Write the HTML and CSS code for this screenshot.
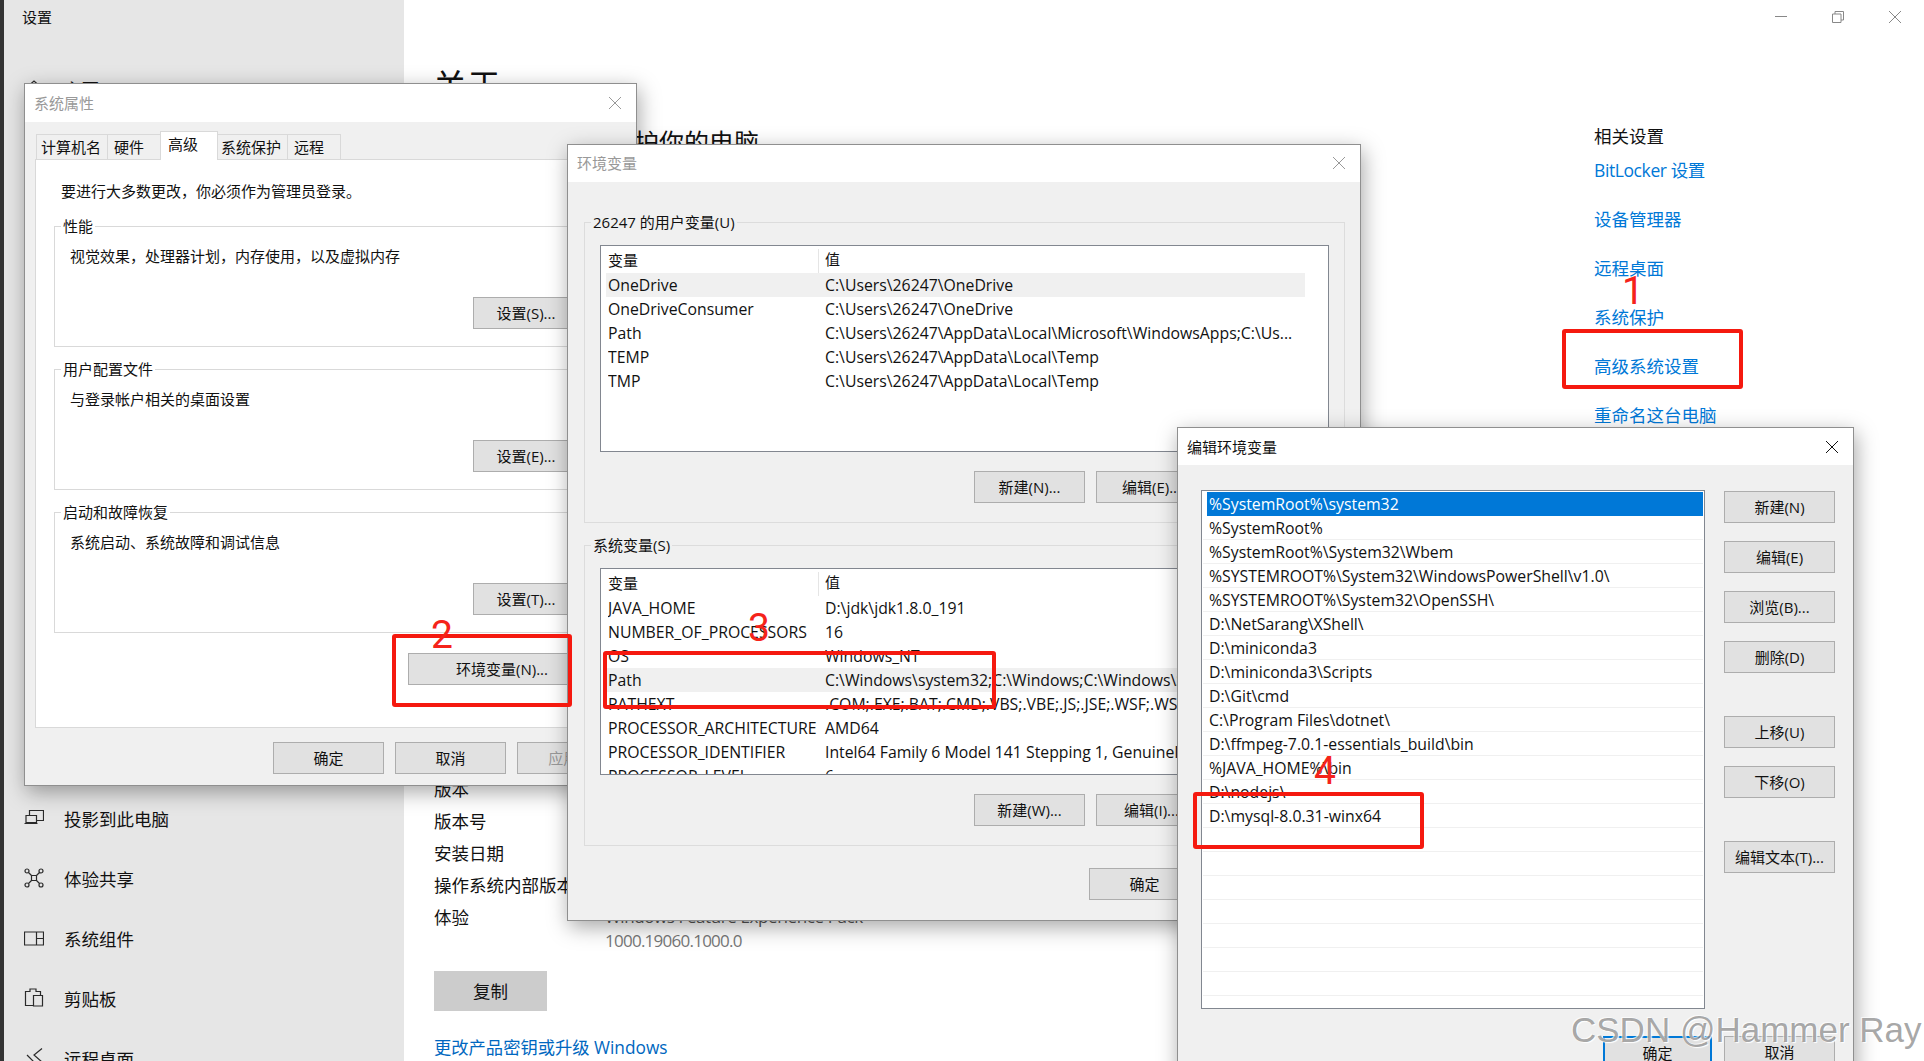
FILE: index.html
```html
<!DOCTYPE html>
<html lang="zh-CN">
<head>
<meta charset="utf-8">
<title>设置</title>
<link rel="stylesheet" href="styles.css">
</head>
<body>
<div class="desktop">
  <aside class="sidebar">
    <div class="app-title">设置</div>
    <div class="nav-home">
      <svg class="nav-icon" viewBox="0 0 20 20"><path d="M2 10 10 3l8 7M5 8v9h10V8"/></svg>
      <span>主页</span>
    </div>
    <nav class="nav-list">
      <div class="nav-item">
        <svg class="nav-icon" viewBox="0 0 20 20"><path d="M5.500 7V2.500H19.500V12.500H13M2 7.500H12.500V14.500H2ZM.5 15.500H13.500"/></svg>
        <span>投影到此电脑</span>
      </div>
      <div class="nav-item">
        <svg class="nav-icon" viewBox="0 0 20 20"><circle cx="3" cy="3" r="2"/><circle cx="17" cy="3" r="2"/><circle cx="3" cy="17" r="2"/><circle cx="17" cy="17" r="2"/><path d="M7.500 7.500H12.500V12.500H7.500ZM4.500 4.500 7.500 7.500M15.500 4.500 12.500 7.500M4.500 15.500 7.500 12.500M15.500 15.500 12.500 12.500"/></svg>
        <span>体验共享</span>
      </div>
      <div class="nav-item">
        <svg class="nav-icon" viewBox="0 0 20 20"><path d="M.5 4H19.500V17H.5ZM12.500 4V17M12.500 10.500H19.500"/></svg>
        <span>系统组件</span>
      </div>
      <div class="nav-item">
        <svg class="nav-icon" viewBox="0 0 20 20"><path d="M9 17.500H1.500V3.500H6V1H12V3.500H16.500V7M9.500 7.500H18.500V18H9.500Z"/></svg>
        <span>剪贴板</span>
      </div>
      <div class="nav-item">
        <svg class="nav-icon" viewBox="0 0 20 20"><path d="M18 .5 10 7 18 14M3 7 10 14"/></svg>
        <span>远程桌面</span>
      </div>
    </nav>
  </aside>

  <main class="content">
    <div class="about">
      <h1 class="about-title">关于</h1>
      <h2 class="about-sub">系统正在监控并保护你的电脑</h2>
      <dl class="spec">
        <dt>版本</dt><dd>Windows 10 专业版</dd>
        <dt>版本号</dt><dd>22H2</dd>
        <dt>安装日期</dt><dd>2023/3/1</dd>
        <dt>操作系统内部版本</dt><dd>19045.4894</dd>
        <dt>体验</dt><dd>Windows Feature Experience Pack<br><span class="muted">1000.19060.1000.0</span></dd>
      </dl>
      <div class="copy-btn">复制</div>
      <div class="product-link">更改产品密钥或升级 Windows</div>
    </div>
    <div class="related">
      <div class="related-title">相关设置</div>
      <div class="related-link is-tight">BitLocker 设置</div>
      <div class="related-link">设备管理器</div>
      <div class="related-link">远程桌面</div>
      <div class="related-link">系统保护</div>
      <div class="related-link">高级系统设置</div>
      <div class="related-link">重命名这台电脑</div>
    </div>
  </main>

  <div class="winctl">
    <svg class="ctl-min" viewBox="0 0 12 12"><path d="M0 5.500H12"/></svg>
    <svg class="ctl-max" viewBox="0 0 12 12"><path d="M.5 3V11.500H9V3ZM3 3V.5H11.500V9H9"/></svg>
    <svg class="ctl-close" viewBox="0 0 12 12"><path d="M0 0 12 12M12 0 0 12"/></svg>
  </div>

  <!-- 系统属性 -->
  <section class="win win-sys">
    <header class="titlebar is-dim"><span>系统属性</span>
      <svg class="x" viewBox="0 0 12 12"><path d="M0 0 12 12M12 0 0 12"/></svg></header>
    <div class="tabs">
      <div class="tab tab-a">计算机名</div>
      <div class="tab tab-b">硬件</div>
      <div class="tab tab-on">高级</div>
      <div class="tab tab-d">系统保护</div>
      <div class="tab tab-e">远程</div>
    </div>
    <div class="panel">
      <p class="intro">要进行大多数更改，你必须作为管理员登录。</p>
      <div class="group">
        <span class="legend">性能</span>
        <p class="group-text">视觉效果，处理器计划，内存使用，以及虚拟内存</p>
        <div class="btn btn-set">设置(S)...</div>
      </div>
      <div class="group">
        <span class="legend">用户配置文件</span>
        <p class="group-text">与登录帐户相关的桌面设置</p>
        <div class="btn btn-set">设置(E)...</div>
      </div>
      <div class="group">
        <span class="legend">启动和故障恢复</span>
        <p class="group-text">系统启动、系统故障和调试信息</p>
        <div class="btn btn-set">设置(T)...</div>
      </div>
      <div class="btn btn-env">环境变量(N)...</div>
    </div>
    <div class="footer">
      <div class="btn">确定</div>
      <div class="btn">取消</div>
      <div class="btn is-disabled">应用(A)</div>
    </div>
  </section>

  <!-- 环境变量 -->
  <section class="win win-env">
    <header class="titlebar is-dim"><span>环境变量</span>
      <svg class="x" viewBox="0 0 12 12"><path d="M0 0 12 12M12 0 0 12"/></svg></header>
    <div class="env-body">
      <div class="env-group">
        <span class="legend">26247 的用户变量(U)</span>
        <div class="list">
          <div class="list-head"><span class="head-name">变量</span><span>值</span></div>
          <div class="list-row is-hot"><span class="cell-name">OneDrive</span><span class="cell-val">C:\Users\26247\OneDrive</span></div>
          <div class="list-row"><span class="cell-name">OneDriveConsumer</span><span class="cell-val">C:\Users\26247\OneDrive</span></div>
          <div class="list-row"><span class="cell-name">Path</span><span class="cell-val">C:\Users\26247\AppData\Local\Microsoft\WindowsApps;C:\Us...</span></div>
          <div class="list-row"><span class="cell-name">TEMP</span><span class="cell-val">C:\Users\26247\AppData\Local\Temp</span></div>
          <div class="list-row"><span class="cell-name">TMP</span><span class="cell-val">C:\Users\26247\AppData\Local\Temp</span></div>
        </div>
        <div class="env-actions">
          <div class="btn">新建(N)...</div>
          <div class="btn">编辑(E)...</div>
          <div class="btn">删除(D)</div>
        </div>
      </div>
      <div class="env-group">
        <span class="legend">系统变量(S)</span>
        <div class="list">
          <div class="list-head"><span class="head-name">变量</span><span>值</span></div>
          <div class="list-row"><span class="cell-name">JAVA_HOME</span><span class="cell-val">D:\jdk\jdk1.8.0_191</span></div>
          <div class="list-row"><span class="cell-name">NUMBER_OF_PROCESSORS</span><span class="cell-val">16</span></div>
          <div class="list-row"><span class="cell-name">OS</span><span class="cell-val">Windows_NT</span></div>
          <div class="list-row is-hot"><span class="cell-name">Path</span><span class="cell-val">C:\Windows\system32;C:\Windows;C:\Windows\System32\Wbem</span></div>
          <div class="list-row"><span class="cell-name">PATHEXT</span><span class="cell-val">.COM;.EXE;.BAT;.CMD;.VBS;.VBE;.JS;.JSE;.WSF;.WSH;.MSC</span></div>
          <div class="list-row"><span class="cell-name">PROCESSOR_ARCHITECTURE</span><span class="cell-val">AMD64</span></div>
          <div class="list-row"><span class="cell-name">PROCESSOR_IDENTIFIER</span><span class="cell-val">Intel64 Family 6 Model 141 Stepping 1, GenuineIntel</span></div>
          <div class="list-row"><span class="cell-name">PROCESSOR_LEVEL</span><span class="cell-val">6</span></div>
        </div>
        <div class="env-actions">
          <div class="btn">新建(W)...</div>
          <div class="btn">编辑(I)...</div>
          <div class="btn">删除(L)</div>
        </div>
      </div>
      <div class="env-footer">
        <div class="btn">确定</div>
        <div class="btn">取消</div>
      </div>
    </div>
  </section>

  <!-- 编辑环境变量 -->
  <section class="win win-edit">
    <header class="titlebar"><span>编辑环境变量</span>
      <svg class="x" viewBox="0 0 12 12"><path d="M0 0 12 12M12 0 0 12"/></svg></header>
    <div class="edit-body">
      <div class="path-list">
        <div class="path-row is-sel">%SystemRoot%\system32</div>
        <div class="path-row">%SystemRoot%</div>
        <div class="path-row">%SystemRoot%\System32\Wbem</div>
        <div class="path-row">%SYSTEMROOT%\System32\WindowsPowerShell\v1.0\</div>
        <div class="path-row">%SYSTEMROOT%\System32\OpenSSH\</div>
        <div class="path-row">D:\NetSarang\XShell\</div>
        <div class="path-row">D:\miniconda3</div>
        <div class="path-row">D:\miniconda3\Scripts</div>
        <div class="path-row">D:\Git\cmd</div>
        <div class="path-row">C:\Program Files\dotnet\</div>
        <div class="path-row">D:\ffmpeg-7.0.1-essentials_build\bin</div>
        <div class="path-row">%JAVA_HOME%\bin</div>
        <div class="path-row">D:\nodejs\</div>
        <div class="path-row">D:\mysql-8.0.31-winx64</div>
        <div class="path-row"></div><div class="path-row"></div><div class="path-row"></div>
        <div class="path-row"></div><div class="path-row"></div><div class="path-row"></div>
        <div class="path-row"></div><div class="path-row"></div>
      </div>
      <div class="edit-side">
        <div class="btn">新建(N)</div>
        <div class="btn">编辑(E)</div>
        <div class="btn">浏览(B)...</div>
        <div class="btn">删除(D)</div>
        <div class="btn side-gap">上移(U)</div>
        <div class="btn">下移(O)</div>
        <div class="btn side-gap">编辑文本(T)...</div>
      </div>
      <div class="edit-footer">
        <div class="btn btn-primary">确定</div>
        <div class="btn">取消</div>
      </div>
    </div>
  </section>

  <!-- 标注 -->
  <div class="mark mark-1"></div>
  <div class="mark mark-2"></div>
  <div class="mark mark-3"></div>
  <div class="mark mark-4"></div>
  <span class="num num-1">1</span>
  <span class="num num-2">2</span>
  <span class="num num-3">3</span>
  <span class="num num-4">4</span>
  <div class="watermark">CSDN @Hammer Ray</div>
</div>
</body>
</html>
```
FILE: styles.css
```css
* { box-sizing: border-box; }
html, body { margin: 0; padding: 0; }
body { font-family: "Open Sans", "Noto Sans CJK SC", sans-serif; color: #111; background: #fff; }
p, h1, h2, dl, dd { margin: 0; font-weight: 400; }

.desktop { position: relative; width: 1924px; height: 1061px; overflow: hidden; display: flex; background: #fff; border-left: 4px solid #333; }

/* settings sidebar */
.sidebar { width: 400px; height: 1061px; background: #e6e6e6; flex: none; font-size: 17.5px; overflow: hidden; }
.app-title { font-size: 15px; line-height: 20px; padding: 7px 0 0 18px; }
.nav-home { display: flex; align-items: center; gap: 20px; padding-left: 20px; height: 60px; margin-top: 31px; }
.nav-list { margin-top: 670px; }
.nav-item { display: flex; align-items: center; gap: 20px; padding-left: 20px; height: 60px; }
.nav-icon { width: 20px; height: 20px; fill: none; stroke: #2a2a2a; stroke-width: 1.2; flex: none; }

/* settings main */
.content { flex: 1; display: flex; justify-content: space-between; min-width: 0; }
.about { padding-left: 30px; width: 1100px; font-size: 17.5px; }
.about-title { font-size: 34px; line-height: 44px; margin-top: 64px; margin-left: -1px; }
.about-sub { font-size: 25px; line-height: 34px; margin-top: 17px; white-space: nowrap; }
.spec { display: grid; grid-template-columns: 171px 1fr; grid-auto-rows: 32px; line-height: 32px; margin-top: 614px; }
.spec dd { line-height: 24px; padding-top: 4px; color: #555; font-size: 17px; letter-spacing: -.4px; white-space: nowrap; }
.muted { color: #777; letter-spacing: -.75px; }
.copy-btn { width: 113px; height: 40px; line-height: 40px; text-align: center; background: #ccc; margin-top: 38px; }
.product-link { color: #0067c0; font-size: 17.3px; line-height: 24px; margin-top: 25px; white-space: nowrap; }
.related { width: 330px; flex: none; font-size: 17.5px; color: #0078d7; padding-top: 121.4px; }
.related-title { color: #111; line-height: 30px; }
.related-link { line-height: 30px; margin-top: 19px; white-space: nowrap; }
.related-title + .related-link { margin-top: 4px; }
.is-tight { letter-spacing: -.4px; }

.winctl { position: absolute; top: 11px; left: 1771px; display: flex; gap: 45px; }
.winctl svg { width: 12px; height: 12px; fill: none; stroke: #888; stroke-width: 1; }

/* windows */
.win { position: absolute; background: #f0f0f0; border: 1px solid #8f8f8f; box-shadow: 2px 6px 20px rgba(0,0,0,.35); font-size: 15px; white-space: nowrap; }
.win-sys { left: 20px; top: 83px; width: 613px; height: 703px; }
.win-env { left: 563px; top: 144px; width: 794px; height: 777px; }
.win-edit { left: 1173px; top: 427px; width: 677px; height: 660px; }

.titlebar { height: 37px; background: #fff; display: flex; align-items: center; justify-content: space-between; padding: 0 15px 0 9px; font-size: 15px; }
.win-sys .titlebar { height: 38px; }
.is-dim { color: #999; padding-bottom: 2px; }
.x { width: 12px; height: 12px; fill: none; stroke: #999; stroke-width: 1; }
.win-sys .x { margin-top: 2px; }
.titlebar:not(.is-dim) .x { stroke: #111; }

/* tabs */
.tabs { display: flex; align-items: flex-end; height: 25px; margin: 12px 0 0 12px; position: relative; z-index: 1; }
.tab { height: 25px; line-height: 24px; border: 1px solid #d9d9d9; border-bottom: 0; margin-left: -1px; background: #f0f0f0; }
.tab-a { width: 72px; padding-left: 4px; }
.tab-b { width: 54px; padding-left: 6px; }
.tab-on { width: 58px; height: 29px; line-height: 24px; background: #fff; margin-bottom: -1px; padding: 0 0 4px 7px; }
.tab-d { width: 71px; padding-left: 3px; }
.tab-e { width: 54px; padding-left: 6px; }

.panel { margin: 0 11px 0 10px; height: 569px; background: #fff; border: 1px solid #d9d9d9; padding: 21px 0 0 18px; display: flex; flex-direction: column; }
.intro { line-height: 20px; padding-left: 7px; margin-bottom: 25px; }
.group { position: relative; width: 542px; height: 121px; border: 1px solid #d9d9d9; margin-bottom: 22px; padding: 19px 16px 0 15px; display: flex; flex-direction: column; }
.legend { position: absolute; top: -11px; left: 6px; line-height: 20px; padding: 0 2px; background: #fff; }
.group-text { line-height: 20px; }
.btn { height: 32px; width: 111px; line-height: 30px; text-align: center; background: #e1e1e1; border: 1px solid #adadad; flex: none; }
.btn-set { width: 106px; align-self: flex-end; margin-top: 31px; }
.btn-env { width: 188px; margin: -2px 0 0 354px; }
.footer { display: flex; justify-content: flex-end; gap: 11px; margin-top: 14px; padding-right: 8px; }
.is-disabled { color: #999; }

/* env */
.env-body { padding: 40px 15px 0 16px; }
.env-group { position: relative; height: 301px; border: 1px solid #dcdcdc; margin-bottom: 22px; padding: 22px 15px 0 15px; }
.env-group .legend { background: #f0f0f0; }
.list { height: 207px; background: #fff; border: 1px solid #828790; overflow: hidden; }
.list-head { display: flex; height: 27px; line-height: 26px; padding-left: 7px; }
.head-name { width: 211px; margin-right: 6px; border-right: 1px solid #e5e5e5; height: 24px; margin-top: 3px; line-height: 22px; }
.list-row { display: flex; height: 24px; line-height: 24px; margin: 0 23px 0 5px; padding-left: 2px; overflow: hidden; font-size: 15.8px; }
.is-hot { background: #f0f0f0; }
.cell-name { width: 217px; flex: none; overflow: hidden; }
.env-actions { display: flex; justify-content: flex-end; gap: 11px; margin-top: 19px; }
.env-footer { display: flex; gap: 11px; padding-left: 505px; line-height: 32px; }

/* edit */
.edit-body { display: grid; grid-template-columns: 504px 111px; column-gap: 19px; padding: 25px 0 0 23px; }
.path-list { height: 519px; background: #fff; border: 1px solid #828790; padding: 1px 0 0 1px; overflow: hidden; font-size: 15.8px; }
.path-row { height: 24px; line-height: 25px; padding-left: 6px; border-bottom: 1px solid #f0f0f0; margin-right: 1px; }
.is-sel { background: #0078d7; color: #fff; margin-left: 4px; padding-left: 2px; border-bottom: 0; }
.edit-side { display: flex; flex-direction: column; gap: 18px; padding-top: 1px; }
.side-gap { margin-top: 25px; }
.edit-footer { grid-column: 1 / 3; display: flex; justify-content: flex-end; gap: 12px; margin-top: 27px; }
.btn-primary { width: 109px; border: 2px solid #0078d7; }

/* annotations */
.mark { position: absolute; border: 4px solid #f5190f; border-radius: 3px; }
.mark-1 { left: 1558px; top: 329px; width: 181px; height: 60px; }
.mark-2 { left: 388px; top: 634px; width: 180px; height: 73px; }
.mark-3 { left: 599px; top: 651px; width: 393px; height: 58px; }
.mark-4 { left: 1189px; top: 792px; width: 231px; height: 57px; }
.num { position: absolute; font-family: Roboto, sans-serif; font-size: 39px; line-height: 39px; color: #f5231a; }
.num-1 { left: 1618px; top: 272px; }
.num-2 { left: 427px; top: 616px; }
.num-3 { left: 744px; top: 609px; }
.num-4 { left: 1310px; top: 752px; }
.watermark { position: absolute; left: 1567px; top: 1010px; font-family: "Liberation Sans", sans-serif; font-size: 35px; line-height: 40px; white-space: nowrap; color: rgba(110,110,110,.62); text-shadow: 1px 1px 1px #fff, -1px -1px 0 rgba(255,255,255,.7); }
```
